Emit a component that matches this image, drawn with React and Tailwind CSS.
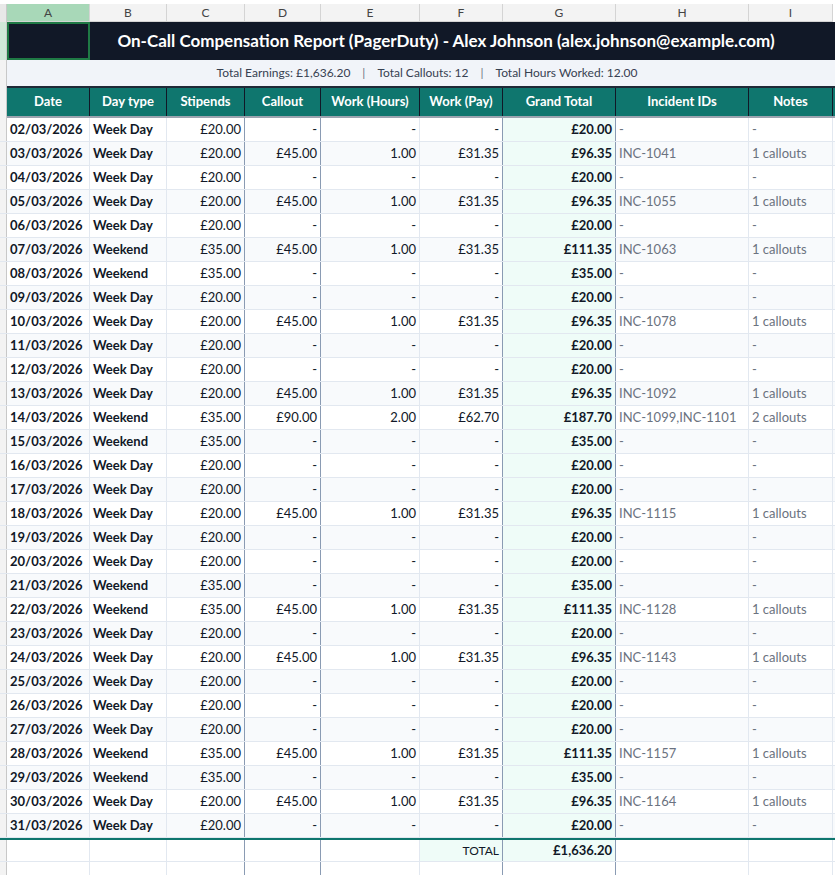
const cols = [
  { l: "A", w: 83 },
  { l: "B", w: 77 },
  { l: "C", w: 78 },
  { l: "D", w: 76 },
  { l: "E", w: 99 },
  { l: "F", w: 83 },
  { l: "G", w: 113 },
  { l: "H", w: 133 },
  { l: "I", w: 84 },
];

const callouts = {
  3: "INC-1041", 5: "INC-1055", 7: "INC-1063", 10: "INC-1078", 13: "INC-1092",
  14: "INC-1099,INC-1101", 18: "INC-1115", 22: "INC-1128", 24: "INC-1143",
  28: "INC-1157", 30: "INC-1164",
};
const weekend = [7, 8, 14, 15, 21, 22, 28, 29];

const rows = [];
for (let d = 2; d <= 31; d++) {
  const we = weekend.includes(d);
  const stip = we ? 35 : 20;
  const inc = callouts[d];
  const n = inc ? inc.split(",").length : 0;
  rows.push({
    date: `${String(d).padStart(2, "0")}/03/2026`,
    type: we ? "Weekend" : "Week Day",
    stip: `£${stip}.00`,
    callout: n ? `£${(45 * n).toFixed(2)}` : "-",
    hours: n ? `${n}.00` : "-",
    pay: n ? `£${(31.35 * n).toFixed(2)}` : "-",
    total: `£${(stip + 45 * n + 31.35 * n).toFixed(2)}`,
    inc: inc || "-",
    notes: n ? `${n} callouts` : "-",
  });
}

// thicker separators on the right of these columns
const thick = [2, 3, 5, 6];
const bR = (i) => (thick.includes(i) ? "border-r border-r-[#8a9bb3]" : "border-r border-r-[#e2e8f0]");

export default function App() {
  return (
    <div className="w-[835px] h-[875px] overflow-hidden bg-white text-[13px] text-[#111827]" style={{ fontFamily: "Lato, 'Open Sans', sans-serif" }}>
      {/* column letters */}
      <div className="flex h-[22px] pt-[4px] bg-white">
        <div className="w-[7px] bg-[#e8e8e8] border-r border-[#c8c8c8]" />
        {cols.map((c, i) => (
          <div
            key={c.l}
            style={{ width: c.w }}
            className={`flex items-center justify-center text-[12px] text-[#444] border-b border-r border-[#d4d4d4] ${i === 0 ? "bg-[#a8d8b8] text-[#0b5b34]" : "bg-[#f3f3f3]"}`}
          >
            {c.l}
          </div>
        ))}
      </div>

      <div className="flex">
        <div className="w-[7px] flex flex-col bg-[#f3f3f3] border-r border-[#c8c8c8]">
          <div className="h-[38px] bg-[#cfe8d8]" />
          <div className="h-[28px]" />
          <div className="h-[30px]" />
        </div>
        <div className="flex-1">
          {/* title */}
          <div className="h-[38px] bg-[#111827] flex relative">
            <div className="w-[83px] h-full border-2 border-[#1f7a45]" />
            <div className="absolute inset-0 flex items-center justify-center pl-[50px] text-white font-bold text-[17px]">
              On-Call Compensation Report (PagerDuty) - Alex Johnson (alex.johnson@example.com)
            </div>
          </div>
          {/* summary */}
          <div className="h-[28px] bg-[#f1f4f9] flex items-center justify-center gap-3 text-[12px] text-[#374151] border-b-2 border-[#1f2937] pl-[12px]">
            <span>Total Earnings: £1,636.20</span>
            <span className="text-[#6b7280]">|</span>
            <span>Total Callouts: 12</span>
            <span className="text-[#6b7280]">|</span>
            <span>Total Hours Worked: 12.00</span>
          </div>
          {/* header */}
          <div className="flex h-[30px] bg-[#0f766e] border-b-2 border-[#9ca3af]">
            {["Date", "Day type", "Stipends", "Callout", "Work (Hours)", "Work (Pay)", "Grand Total", "Incident IDs", "Notes"].map((h, i) => (
              <div key={h} style={{ width: cols[i].w }} className="flex items-center justify-center text-white font-bold text-[13px] border-r border-[#111827]">
                {h}
              </div>
            ))}
          </div>
        </div>
      </div>

      {/* data */}
      {rows.map((r, ri) => (
        <div key={r.date} className={`flex h-[24px] border-b border-[#e2e8f0] ${ri % 2 ? "bg-[#f8fafc]" : "bg-white"}`}>
          <div className="w-[7px] bg-[#f3f3f3] border-r border-[#c8c8c8]" />
          {[r.date, r.type, r.stip, r.callout, r.hours, r.pay, r.total, r.inc, r.notes].map((v, i) => (
            <div
              key={i}
              style={{ width: cols[i].w }}
              className={`flex items-center px-[3px] whitespace-nowrap overflow-hidden ${bR(i)} ${
                i < 2 ? "font-bold" : ""
              } ${i >= 2 && i <= 6 ? "justify-end" : ""} ${i === 6 ? "font-bold bg-[#effcf8]" : ""} ${
                i >= 7 ? "text-[#6b7280]" : ""
              }`}
            >
              {v}
            </div>
          ))}
        </div>
      ))}

      {/* total */}
      <div className="flex h-[24px] border-t-2 border-[#0f766e] border-b border-b-[#e2e8f0]">
        <div className="w-[7px] bg-[#f3f3f3] border-r border-[#c8c8c8]" />
        {cols.map((c, i) => (
          <div
            key={c.l}
            style={{ width: c.w }}
            className={`flex items-center justify-end px-[3px] ${bR(i)} ${i === 5 ? "bg-[#effcf8] text-[12px]" : ""} ${i === 6 ? "bg-[#effcf8] font-bold" : ""}`}
          >
            {i === 5 ? "TOTAL" : i === 6 ? "£1,636.20" : ""}
          </div>
        ))}
      </div>
      <div className="flex h-[24px]">
        <div className="w-[7px] bg-[#f3f3f3] border-r border-[#c8c8c8]" />
        {cols.map((c, i) => (
          <div key={c.l} style={{ width: c.w }} className={bR(i)} />
        ))}
      </div>
    </div>
  );
}
